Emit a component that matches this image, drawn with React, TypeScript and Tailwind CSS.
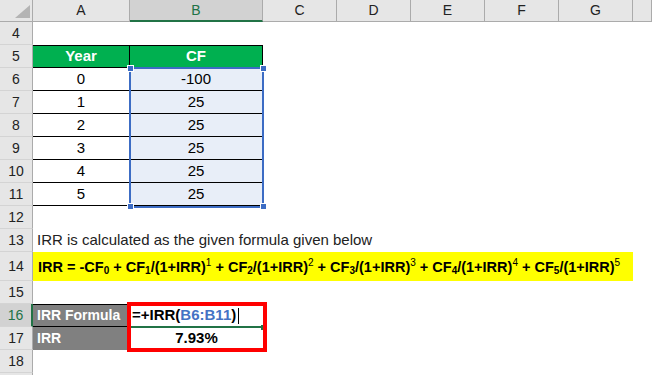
import type { ReactNode } from "react";

const cols = ["A", "B", "C", "D", "E", "F", "G", ""];
const colW = ["w-[97px]", "w-[133px]", "w-[74px]", "w-[74px]", "w-[74px]", "w-[74px]", "w-[74px]", "flex-1"];

function RowHead({ n, active }: { n?: number; active?: boolean }) {
  return (
    <div
      className={`w-[33px] shrink-0 flex items-center justify-center border-b border-b-[#d4d4d4] text-[14px] ${
        active
          ? "bg-[#d2d2d2] text-[#217346] border-r-2 border-r-[#217346]"
          : "bg-[#e6e6e6] text-[#222] border-r border-r-[#ababab]"
      }`}
    >
      {n}
    </div>
  );
}

function Row({ n, tall, active, children }: { n?: number; tall?: boolean; active?: boolean; children?: ReactNode }) {
  return (
    <div className={`flex shrink-0 ${tall ? "h-[29px]" : "h-[23px]"}`}>
      <RowHead n={n} active={active} />
      {children}
    </div>
  );
}

const years = [
  { y: 0, cf: -100 },
  { y: 1, cf: 25 },
  { y: 2, cf: 25 },
  { y: 3, cf: 25 },
  { y: 4, cf: 25 },
  { y: 5, cf: 25 },
];

export default function App() {
  return (
    <div className="relative w-[652px] h-[375px] overflow-hidden bg-white text-black font-['Liberation_Sans',Arial,sans-serif] text-[15px] flex flex-col">
      {/* column headers */}
      <div className="flex h-[22px] shrink-0">
        <div className="w-[33px] shrink-0 bg-[#e6e6e6] border-r border-b border-[#ababab] relative">
          <svg className="absolute left-[15px] top-[5px]" width="15" height="13" viewBox="0 0 15 13">
            <polygon points="15,0 15,13 0,13" fill="#b4b4b4" />
          </svg>
        </div>
        {cols.map((c, i) => (
          <div
            key={i}
            className={`${colW[i]} shrink-0 flex items-center justify-center text-[14px] border-r border-r-[#ababab] ${
              c === "B"
                ? "bg-[#d2d2d2] text-[#217346] border-b-2 border-b-[#217346]"
                : "bg-[#e6e6e6] text-[#222] border-b border-b-[#ababab]"
            }`}
          >
            {c}
          </div>
        ))}
      </div>

      <Row n={4} />
      <Row n={5}>
        <div className="w-[97px] flex items-center justify-center bg-[#00b050] text-white font-bold border-t border-b border-r border-black">Year</div>
        <div className="w-[133px] flex items-center justify-center bg-[#00b050] text-white font-bold border-t border-b border-r border-black">CF</div>
      </Row>
      {years.map((r, i) => (
        <Row key={r.y} n={6 + i}>
          <div className="w-[97px] flex items-center justify-center border-b border-r border-black">{r.y}</div>
          <div className="w-[133px] flex items-center justify-center bg-[#e8eef8] border-b border-r border-black">{r.cf}</div>
        </Row>
      ))}
      <Row n={12} />
      <Row n={13}>
        <div className="flex-1 flex items-center pl-[4px] whitespace-nowrap text-[#222]">IRR is calculated as the given formula given below</div>
      </Row>
      <Row n={14} tall>
        <div className="w-[600px] flex items-center pt-[3px] pl-[5px] bg-[#ffff00] font-bold text-[14.5px] whitespace-nowrap overflow-hidden">
          IRR = -CF<sub className="text-[10px]">0</sub>&nbsp;+ CF<sub className="text-[10px]">1</sub>/(1+IRR)
          <sup className="text-[10px] font-normal">1</sup>&nbsp;+ CF<sub className="text-[10px]">2</sub>/(1+IRR)
          <sup className="text-[10px] font-normal">2</sup>&nbsp;+ CF<sub className="text-[10px]">3</sub>/(1+IRR)
          <sup className="text-[10px] font-normal">3</sup>&nbsp;+ CF<sub className="text-[10px]">4</sub>/(1+IRR)
          <sup className="text-[10px] font-normal">4</sup>&nbsp;+ CF<sub className="text-[10px]">5</sub>/(1+IRR)
          <sup className="text-[10px] font-normal">5</sup>
        </div>
      </Row>
      <Row n={15} />
      <Row n={16} active>
        <div className="w-[97px] flex items-center pl-[4px] bg-[#808080] text-white font-bold text-[14px] border-t border-b border-black whitespace-nowrap">IRR Formula</div>
        <div className="w-[133px] flex items-center pl-[2px] font-bold whitespace-nowrap">
          =+IRR(<span className="text-[#4472c4]">B6:B11</span>)
          <span className="ml-[2px] inline-block w-px h-[16px] bg-black" />
        </div>
      </Row>
      <Row n={17}>
        <div className="w-[97px] flex items-center pl-[4px] bg-[#808080] text-white font-bold text-[14px]">IRR</div>
        <div className="w-[133px] flex items-center justify-center font-bold">7.93%</div>
      </Row>
      <Row n={18} />
      <Row />

      {/* range reference highlight B6:B11 */}
      <div className="absolute left-[129px] top-[67px] w-[135px] h-[141px] border-2 border-[#3c6cc4]" />
      <div className="absolute left-[127px] top-[65px] w-[7px] h-[7px] bg-[#3c6cc4] border border-white" />
      <div className="absolute left-[260px] top-[65px] w-[7px] h-[7px] bg-[#3c6cc4] border border-white" />
      <div className="absolute left-[127px] top-[203px] w-[7px] h-[7px] bg-[#3c6cc4] border border-white" />
      <div className="absolute left-[260px] top-[203px] w-[7px] h-[7px] bg-[#3c6cc4] border border-white" />

      {/* active cell B16 */}
      <div className="absolute left-[129px] top-[326px] w-[134px] h-[2px] bg-[#217346]" />
      <div className="absolute left-[261px] top-[325px] w-[5px] h-[5px] bg-[#217346]" />

      {/* red annotation box */}
      <div className="absolute left-[127px] top-[302px] w-[140px] h-[50px] border-4 border-[#ff0000]" />
    </div>
  );
}
